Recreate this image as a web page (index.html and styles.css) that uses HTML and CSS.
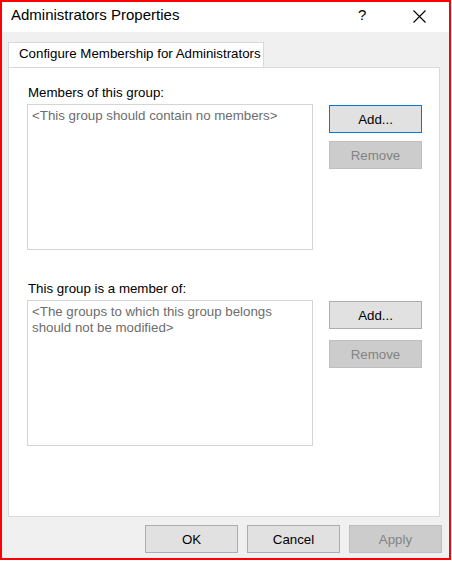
FILE: index.html
```html
<!DOCTYPE html>
<html>
<head>
<meta charset="utf-8">
<link rel="stylesheet" href="styles.css">
</head>
<body>
<div class="frame">
  <div class="titlebar">
    <div class="title">Administrators Properties</div>
    <div class="help">?</div>
    <div class="close">
      <svg width="13" height="13" viewBox="0 0 13 13"><path d="M0.5 0.5 L12.5 12.5 M12.5 0.5 L0.5 12.5" stroke="#000" stroke-width="1.1" fill="none"/></svg>
    </div>
  </div>
  <div class="body">
    <div class="tabs">
      <div class="tab">Configure Membership for Administrators</div>
    </div>
    <div class="panel">
      <div class="label">Members of this group:</div>
      <div class="row">
        <div class="listbox">&lt;This group should contain no members&gt;</div>
        <div class="side">
          <div class="btn focused">Add...</div>
          <div class="btn disabled">Remove</div>
        </div>
      </div>
      <div class="label second">This group is a member of:</div>
      <div class="row">
        <div class="listbox">&lt;The groups to which this group belongs<br>should not be modified&gt;</div>
        <div class="side wide">
          <div class="btn">Add...</div>
          <div class="btn disabled">Remove</div>
        </div>
      </div>
    </div>
    <div class="footer">
      <div class="btn">OK</div>
      <div class="btn">Cancel</div>
      <div class="btn disabled">Apply</div>
    </div>
  </div>
</div>
</body>
</html>
```
FILE: styles.css
```css
html, body {
  margin: 0;
  padding: 0;
  background: #ffffff;
}
.frame {
  width: 451px;
  height: 560px;
  box-sizing: border-box;
  border: 2px solid #ff0000;
  background: #f0f0f0;
  display: flex;
  flex-direction: column;
  font-family: "Liberation Sans", Arial, sans-serif;
  font-size: 13.3px;
  color: #000;
}
.titlebar {
  height: 30px;
  flex: none;
  background: #ffffff;
  display: flex;
  align-items: flex-start;
  box-sizing: border-box;
  padding-top: 4px;
  padding-left: 9px;
}
.title {
  flex: 1;
  font-size: 15px;
  line-height: 17px;
}
.help {
  font-size: 15px;
  line-height: 17px;
  width: 53px;
}
.close {
  width: 36px;
  padding-top: 4px;
  padding-left: 2px;
  line-height: 0;
}
.body {
  flex: 1;
  display: flex;
  flex-direction: column;
  padding: 10px 0 0 6px;
}
.tabs {
  display: flex;
  height: 25px;
}
.tab {
  position: relative;
  z-index: 1;
  background: #fff;
  border: 1px solid #d9d9d9;
  border-bottom: none;
  height: 25px;
  box-sizing: border-box;
  padding: 3px 6px 0 10px;
  line-height: 15px;
  width: 256px;
  white-space: nowrap;
}
.panel {
  width: 432px;
  height: 450px;
  box-sizing: border-box;
  background: #fff;
  border: 1px solid #d9d9d9;
  padding: 17px 0 0 18px;
  display: flex;
  flex-direction: column;
}
.label {
  line-height: 15px;
  margin-left: 1px;
  margin-bottom: 4px;
}
.label.second {
  margin-top: 31px;
}
.row {
  display: flex;
  gap: 16px;
}
.listbox {
  width: 286px;
  height: 146px;
  box-sizing: border-box;
  border: 1px solid #d5d5d5;
  padding: 3px 4px;
  line-height: 16px;
  color: #6d6d6d;
}
.side {
  display: flex;
  flex-direction: column;
  gap: 8px;
  padding-top: 1px;
}
.side.wide {
  gap: 11px;
}
.btn {
  width: 93px;
  height: 28px;
  box-sizing: border-box;
  background: #e1e1e1;
  border: 1px solid #adadad;
  display: flex;
  align-items: center;
  justify-content: center;
  line-height: 15px;
  color: #000;
}
.btn.focused {
  border-color: #0078d7;
}
.btn.disabled {
  background: #cccccc;
  border-color: #bfbfbf;
  color: #838383;
}
.footer {
  display: flex;
  justify-content: flex-end;
  gap: 9px;
  margin-top: 8px;
  padding-right: 7px;
}
```
